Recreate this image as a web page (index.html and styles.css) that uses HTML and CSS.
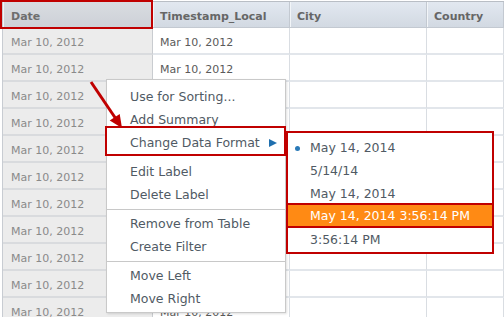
FILE: index.html
```html
<!DOCTYPE html>
<html lang="en">

<head>
    <meta charset="UTF-8">
    <title>Data Format</title>
    <link rel="stylesheet" href="styles.css">
</head>

<body>
    <div class="grid">
        <div class="row head">
            <div class="cell date">Date</div>
            <div class="cell">Timestamp_Local</div>
            <div class="cell">City</div>
            <div class="cell">Country</div>
        </div>
        <div class="row"><div class="cell date">Mar 10, 2012</div><div class="cell">Mar 10, 2012</div><div class="cell"></div><div class="cell"></div></div>
        <div class="row"><div class="cell date">Mar 10, 2012</div><div class="cell">Mar 10, 2012</div><div class="cell"></div><div class="cell"></div></div>
        <div class="row"><div class="cell date">Mar 10, 2012</div><div class="cell">Mar 10, 2012</div><div class="cell"></div><div class="cell"></div></div>
        <div class="row"><div class="cell date">Mar 10, 2012</div><div class="cell">Mar 10, 2012</div><div class="cell"></div><div class="cell"></div></div>
        <div class="row"><div class="cell date">Mar 10, 2012</div><div class="cell">Mar 10, 2012</div><div class="cell"></div><div class="cell"></div></div>
        <div class="row"><div class="cell date">Mar 10, 2012</div><div class="cell">Mar 10, 2012</div><div class="cell"></div><div class="cell"></div></div>
        <div class="row"><div class="cell date">Mar 10, 2012</div><div class="cell">Mar 10, 2012</div><div class="cell"></div><div class="cell"></div></div>
        <div class="row"><div class="cell date">Mar 10, 2012</div><div class="cell">Mar 10, 2012</div><div class="cell"></div><div class="cell"></div></div>
        <div class="row"><div class="cell date">Mar 10, 2012</div><div class="cell">Mar 10, 2012</div><div class="cell"></div><div class="cell"></div></div>
        <div class="row"><div class="cell date">Mar 10, 2012</div><div class="cell">Mar 10, 2012</div><div class="cell"></div><div class="cell"></div></div>
        <div class="row"><div class="cell date">Mar 10, 2012</div><div class="cell">Mar 10, 2012</div><div class="cell"></div><div class="cell"></div></div>
    </div>

    <!-- context menu -->
    <ul class="menu">
        <li>Use for Sorting...</li>
        <li>Add Summary</li>
        <li class="has-sub">Change Data Format <span class="tri"></span></li>
        <li class="sep blank"></li>
        <li>Edit Label</li>
        <li>Delete Label</li>
        <li class="sep"></li>
        <li>Remove from Table</li>
        <li>Create Filter</li>
        <li class="sep"></li>
        <li>Move Left</li>
        <li>Move Right</li>
    </ul>

    <ul class="submenu">
        <li class="checked">May 14, 2014</li>
        <li>5/14/14</li>
        <li>May 14, 2014</li>
        <li class="active">May 14, 2014 3:56:14 PM</li>
        <li>3:56:14 PM</li>
    </ul>

    <!-- red callouts -->
    <div class="mark mark-date"></div>
    <div class="mark mark-item"></div>
    <svg class="arrow" width="504" height="317" viewBox="0 0 504 317">
        <line x1="91" y1="82" x2="116" y2="119" stroke="#c00000" stroke-width="3" />
        <polygon points="122,128 119.7,113.9 109.7,120.5" fill="#c00000" />
    </svg>
</body>

</html>
```

FILE: styles.css
```css
*,
::before,
::after {
    box-sizing: border-box;
    margin: 0;
    padding: 0;
}

body {
    font-family: "DejaVu Sans", Verdana, sans-serif;
    background: #fff;
    overflow: hidden;
    height: 317px;
}

.grid {
    height: 316px;
    overflow: hidden;
    margin: 1px 0 0 2px;
    border-top: 1px solid #b9bec5;
    border-left: 1px solid #c8ccd2;
}

.row {
    display: grid;
    grid-template-columns: 150px 137px 137px 1fr;
}

.cell {
    height: 27px;
    padding: 5px 7px 0;
    line-height: 20px;
    font-size: 11px;
    color: #5a5a5a;
    white-space: nowrap;
    border-right: 1px solid #d9dde2;
    border-bottom: 2px solid #e2e6eb;
}

.cell.date {
    padding-left: 8px;
    background: #ececec;
    color: #8a8a8a;
    border-bottom-color: #d9dbde;
    border-right-color: #c9ccd0;
}

.head .cell {
    height: 26px;
    padding-top: 3px;
    line-height: 23px;
    font-weight: bold;
    color: #666;
    background: linear-gradient(#e2e8f0, #d2d9e2);
    border-bottom: 1px solid #c3c9d1;
    border-right: 1px solid #c3c9d1;
    box-shadow: inset 1px 0 0 #f2f5f8;
}

.head .cell.date {
    background: linear-gradient(#d9dce1, #cdd1d7);
    color: #6e6e6e;
}

.menu,
.submenu {
    position: absolute;
    list-style: none;
    background: #fff;
    font-size: 12.5px;
    color: #505a64;
}

.menu {
    left: 106px;
    top: 79px;
    width: 180px;
    padding: 5px 0 2px;
    border: 1px solid #c9c9c9;
    box-shadow: 1px 1px 2px rgba(0, 0, 0, 0.12);
}

.menu li {
    height: 23px;
    line-height: 23px;
    padding-left: 23px;
}

.menu li.sep {
    height: 1px;
    margin: 3px 0 2px;
    background: #c8c8c8;
}

.menu li.sep.blank {
    background: transparent;
}

.has-sub {
    display: flex;
    justify-content: space-between;
    align-items: center;
    padding-right: 8px;
}

.tri {
    width: 0;
    height: 0;
    border-top: 4.5px solid transparent;
    border-bottom: 4.5px solid transparent;
    border-left: 8px solid #1f6fae;
}

.submenu {
    left: 286px;
    top: 131px;
    width: 208px;
    padding: 3px 0 1px;
    border: 2px solid #c00000;
}

.submenu li {
    position: relative;
    height: 23px;
    line-height: 23px;
    padding-left: 22px;
}

.submenu li.checked::before {
    content: "";
    position: absolute;
    left: 7px;
    top: 10px;
    width: 5px;
    height: 5px;
    border-radius: 50%;
    background: #2a7ab8;
}

.submenu li.active {
    height: 25px;
    line-height: 21px;
    margin-top: -2px;
    background: #ff8a14;
    color: #fff;
    border-top: 2px solid #c00000;
    border-bottom: 2px solid #c00000;
}

.mark {
    position: absolute;
    border: 2px solid #c00000;
}

.mark-date {
    left: 0;
    top: 0;
    width: 153px;
    height: 29px;
}

.mark-item {
    left: 105px;
    top: 126px;
    width: 181px;
    height: 30px;
}

.arrow {
    position: absolute;
    left: 0;
    top: 0;
    pointer-events: none;
}
```
